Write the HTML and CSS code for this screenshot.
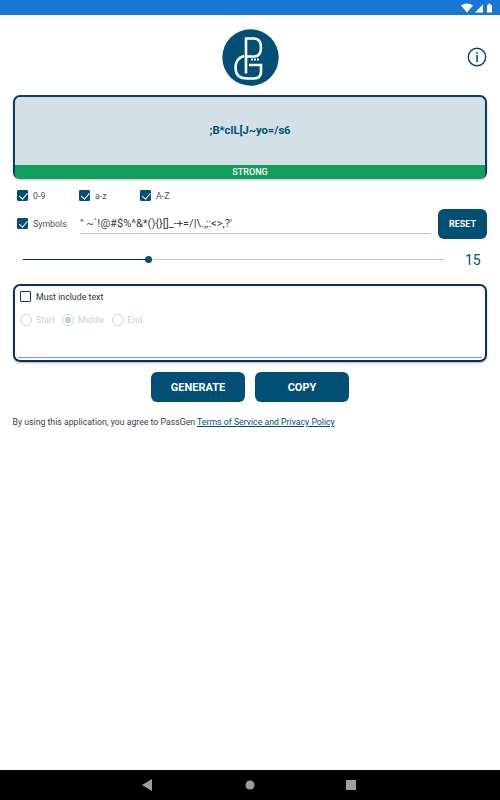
FILE: index.html
```html
<!DOCTYPE html>
<html lang="en">
<head>
    <meta charset="UTF-8">
    <meta name="viewport" content="width=device-width, initial-scale=1.0">
    <title>PassGen</title>
    <link rel="stylesheet" href="styles.css">
</head>
<body>
    <!-- Status bar -->
    <div class="status-bar">
        <svg class="status-icons" width="38" height="12" viewBox="0 0 38 12">
            <path d="M1 3.5Q7-.5 13 3.5L7 10.5Z" fill="#fff"/>
            <path d="M23 2.5V10.5H15Z" fill="#fff"/>
            <path d="M27 3.5Q27 3 27.5 3H28.5V1.5H30.5V3H31.5Q32 3 32 3.5V10.5H27Z" fill="#fff"/>
        </svg>
    </div>

    <main class="content">
        <!-- Logo -->
        <header class="header">
            <svg class="logo" width="57" height="57" viewBox="0 0 57 57">
                <circle cx="28.5" cy="28.5" r="28.2" fill="#024f75"/>
                <g fill="none" stroke="#fff" stroke-width="2.6">
                    <path d="M24 44.5V9.5H32Q39 9.5 39 18.5Q39 27.5 32 27.5H25"/>
                    <path d="M22 27Q13.5 29.5 13.5 38.5Q13.5 49.5 25 49.5H31Q39 49.5 39 43V36H27"/>
                </g>
                <g fill="#fff">
                    <rect x="29" y="29.5" width="2" height="2"/>
                    <rect x="32" y="29.5" width="2" height="2"/>
                    <rect x="35" y="29.5" width="2" height="2"/>
                </g>
            </svg>
            <svg class="info-icon" width="20" height="20" viewBox="0 0 20 20">
                <circle cx="10" cy="10" r="8.7" fill="none" stroke="#0b3c66" stroke-width="1.4"/>
                <rect x="9.3" y="5" width="1.5" height="1.7" fill="#0b3c66"/>
                <rect x="9.3" y="8" width="1.5" height="7" fill="#0b3c66"/>
            </svg>
        </header>

        <!-- Password -->
        <section class="password-card">
            <div class="password-text">;B*clL[J~yo=/s6</div>
            <div class="strength">STRONG</div>
        </section>

        <!-- Character options -->
        <div class="options-row">
            <label class="check check-digits"><span class="box checked"></span>0-9</label>
            <label class="check check-lower"><span class="box checked"></span>a-z</label>
            <label class="check"><span class="box checked"></span>A-Z</label>
        </div>

        <div class="symbols-row">
            <label class="check check-symbols"><span class="box checked"></span>Symbols</label>
            <div class="symbols-input">" ~`!@#$%^&amp;*(){}[]_-+=/|\.,;:&lt;&gt;,?'</div>
            <button class="btn btn-reset">RESET</button>
        </div>

        <!-- Length slider -->
        <div class="slider-row">
            <div class="slider">
                <div class="slider-fill" style="width: 29%"></div>
                <div class="slider-thumb"></div>
                <div class="slider-rest"></div>
            </div>
            <span class="slider-value">15</span>
        </div>

        <!-- Must include text -->
        <section class="include-card">
            <label class="check check-include"><span class="box"></span>Must include text</label>
            <div class="radios">
                <label class="radio"><span class="circle"></span>Start</label>
                <label class="radio"><span class="circle selected"></span>Middle</label>
                <label class="radio"><span class="circle"></span>End</label>
            </div>
            <div class="include-input"></div>
        </section>

        <div class="actions">
            <button class="btn btn-main">GENERATE</button>
            <button class="btn btn-main">COPY</button>
        </div>

        <p class="terms">By using this application, you agree to PassGen <a href="#">Terms of Service and Privacy Policy</a></p>
    </main>

    <!-- Navigation bar -->
    <div class="nav-bar">
        <svg class="nav-back" width="10" height="12" viewBox="0 0 10 12"><path d="M0 6L10 0V12Z" fill="#9e9e9e"/></svg>
        <svg width="10" height="10" viewBox="0 0 10 10"><circle cx="5" cy="5" r="4.5" fill="#9e9e9e"/></svg>
        <svg width="10" height="10" viewBox="0 0 10 10"><rect width="10" height="10" fill="#9e9e9e"/></svg>
    </div>
</body>
</html>
```

FILE: styles.css
```css
* {
    box-sizing: border-box;
}
body {
    font-family: Roboto, "Liberation Sans", sans-serif;
    margin: 0;
    height: 800px;
    display: flex;
    flex-direction: column;
    background-color: #fff;
    color: #33424a;
    overflow: hidden;
}
.status-bar {
    height: 15px;
    background-color: #1976d2;
    display: flex;
    justify-content: flex-end;
    align-items: center;
    padding-right: 2px;
}
.content {
    flex: 1;
    padding: 14px 13px 0;
}
.header {
    height: 66px;
    display: flex;
    justify-content: center;
    position: relative;
}
.info-icon {
    position: absolute;
    right: 0;
    top: 18px;
}
.password-card {
    height: 84px;
    border: 2px solid #0b3c66;
    border-bottom: none;
    border-radius: 7px;
    background-color: #d3e0e8;
    display: flex;
    flex-direction: column;
    overflow: hidden;
    box-shadow: 0 1px 2px rgba(0, 0, 0, 0.25);
}
.password-text {
    flex: 1;
    display: flex;
    align-items: center;
    justify-content: center;
    padding-bottom: 2px;
    font-size: 11.2px;
    font-weight: 700;
    color: #024f75;
}
.strength {
    height: 14px;
    margin: 0 -2px;
    background-color: #129e5b;
    color: #fff;
    font-size: 9px;
    font-weight: 500;
    line-height: 14px;
    text-align: center;
}
.options-row {
    display: flex;
    margin-top: 11px;
    padding-left: 4px;
    height: 11px;
    align-items: center;
}
.check {
    display: flex;
    align-items: center;
    gap: 5px;
    font-size: 8.8px;
    color: #4a5459;
}
.check-digits {
    width: 62px;
}
.check-lower {
    width: 61px;
}
.box {
    width: 11px;
    height: 11px;
    border-radius: 1px;
    border: 1.5px solid #0b3c66;
    position: relative;
    flex: none;
}
.box.checked {
    background-color: #024f75;
    border-color: #024f75;
}
.box.checked::after {
    content: "";
    position: absolute;
    left: 2.5px;
    top: 0;
    width: 3.5px;
    height: 6.5px;
    border: solid #fff;
    border-width: 0 1.5px 1.5px 0;
    transform: rotate(40deg);
}
.symbols-row {
    display: flex;
    align-items: flex-start;
    margin-top: 8px;
    height: 30px;
}
.check-symbols {
    width: 63px;
    margin: 9px 0 0 4px;
    height: 11px;
}
.symbols-input {
    width: 351px;
    height: 25px;
    padding: 8px 0 0;
    margin-right: 7px;
    font-size: 11.1px;
    line-height: 13px;
    color: #37424a;
    border-bottom: 1px solid #b3c6d2;
    white-space: nowrap;
}
.btn {
    font-family: inherit;
    border: none;
    background-color: #024f75;
    color: #fff;
    font-weight: 700;
    cursor: pointer;
    padding: 0;
}
.btn-reset {
    width: 49px;
    height: 30px;
    border-radius: 6px;
    font-size: 9px;
}
.slider-row {
    display: flex;
    align-items: center;
    margin-top: 10px;
    height: 20px;
    padding-left: 10px;
}
.slider {
    width: 421px;
    display: flex;
    align-items: center;
}
.slider-fill {
    height: 1px;
    background-color: #032a5c;
}
.slider-thumb {
    width: 7px;
    height: 7px;
    border-radius: 50%;
    background-color: #024f75;
    flex: none;
}
.slider-rest {
    flex: 1;
    height: 1px;
    background-color: #b3c6d2;
}
.slider-value {
    margin: 2px 0 0 21px;
    font-size: 14px;
    color: #024f75;
}
.include-card {
    height: 78px;
    margin-top: 15px;
    border: 2px solid #0b2f66;
    border-radius: 7px;
    padding: 5px 3px 0 5px;
    box-shadow: 0 1px 2px rgba(0, 0, 0, 0.3);
}
.check-include {
    color: #2b3338;
}
.radios {
    display: flex;
    gap: 7px;
    margin-top: 12px;
    height: 12px;
}
.radio {
    display: flex;
    align-items: center;
    gap: 4px;
    font-size: 8.8px;
    color: #c3d4de;
}
.circle {
    width: 12px;
    height: 12px;
    border-radius: 50%;
    border: 1px solid #c3d4de;
    flex: none;
}
.circle.selected {
    background: radial-gradient(circle, #c3d4de 3px, transparent 3.5px);
}
.include-input {
    margin: 31px 0 0 -2px;
    border-bottom: 1px solid #7fa0b4;
}
.actions {
    display: flex;
    justify-content: center;
    gap: 10px;
    margin-top: 10px;
}
.btn-main {
    width: 94px;
    height: 30px;
    border-radius: 6px;
    font-size: 11px;
}
.terms {
    margin: 14px 0 0 -0.5px;
    font-size: 8.72px;
    line-height: 12px;
    color: #37424a;
}
.terms a {
    color: #024f75;
}
.nav-bar {
    height: 30px;
    background-color: #000;
    display: flex;
    justify-content: center;
    align-items: center;
    gap: 91px;
}
.nav-back {
    margin: 0 2px 0 -2px;
}
```
